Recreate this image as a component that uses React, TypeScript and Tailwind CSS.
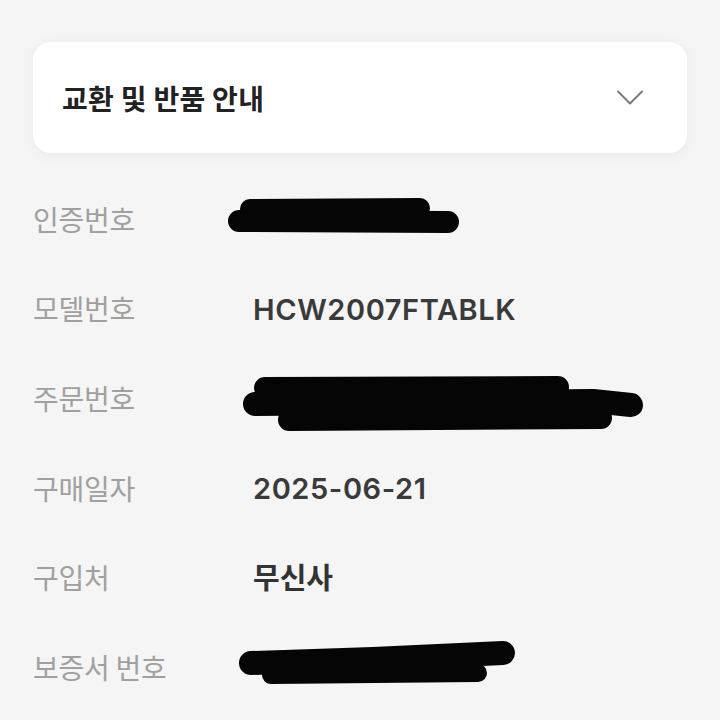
type Row = {
  label: string;
  value?: string;
  latin?: boolean;
  blot?: React.ReactNode;
};

// 가려진 부분: 굵은 둥근 선으로 덧칠
const Blot = ({ strokes }: { strokes: { d: string; w: number }[] }) => (
  <svg className="absolute left-0 top-0 overflow-visible" width="1" height="1">
    {strokes.map((s, i) => (
      <path key={i} d={s.d} stroke="#050505" strokeWidth={s.w} strokeLinecap="round" strokeLinejoin="round" fill="none" />
    ))}
  </svg>
);

const rows: Row[] = [
  {
    label: '인증번호',
    blot: (
      <Blot
        strokes={[
          { d: 'M-3 -10 L167 -11', w: 20 },
          { d: 'M-14 2 L195 3', w: 22 },
        ]}
      />
    ),
  },
  { label: '모델번호', value: 'HCW2007FTABLK', latin: true },
  {
    label: '주문번호',
    blot: (
      <Blot
        strokes={[
          { d: 'M12 -10 L305 -11', w: 22 },
          { d: 'M2 6 L340 3 L378 7', w: 24 },
          { d: 'M36 22 L348 20', w: 22 },
        ]}
      />
    ),
  },
  { label: '구매일자', value: '2025-06-21', latin: true },
  { label: '구입처', value: '무신사' },
  {
    label: '보증서 번호',
    blot: (
      <Blot
        strokes={[
          { d: 'M-2 -4 L120 -8 L250 -14', w: 24 },
          { d: 'M18 8 L225 6', w: 18 },
        ]}
      />
    ),
  },
];

export default function App() {
  return (
    <div
      className="w-[720px] h-[720px] overflow-hidden bg-[#f5f5f5] px-[33px] pt-[42px]"
      style={{ fontFamily: '"Noto Sans CJK KR", "Noto Sans", sans-serif' }}
    >
      <div className="h-[111px] rounded-[18px] bg-white shadow-[0_2px_14px_rgba(0,0,0,0.05)] flex items-center justify-between pl-[29px] pr-[44px]">
        <span className="text-[28px] font-bold tracking-[0.01em] text-[#222222]">교환 및 반품 안내</span>
        <svg width="26" height="15" viewBox="0 0 26 15" fill="none">
          <path d="M1 1.5 L13 13.5 L25 1.5" stroke="#7a7a7a" strokeWidth="2" strokeLinecap="round" strokeLinejoin="round" />
        </svg>
      </div>

      <div className="mt-[21px] flex flex-col">
        {rows.map((r) => (
          <div key={r.label} className="h-[89.6px] flex items-center">
            <span className="w-[220px] shrink-0 text-[28px] tracking-[-0.01em] text-[#a0a0a0]">{r.label}</span>
            <div className="relative flex-1 h-full flex items-center">
              {r.value && (
                <span
                  className={
                    r.latin
                      ? "font-['Inter',sans-serif] text-[29px] font-semibold tracking-[0.02em] text-[#3a3a3a] pt-[3px]"
                      : 'text-[29px] font-bold text-[#333333]'
                  }
                >
                  {r.value}
                </span>
              )}
              {r.blot && <div className="absolute left-0 top-1/2">{r.blot}</div>}
            </div>
          </div>
        ))}
      </div>
    </div>
  );
}
